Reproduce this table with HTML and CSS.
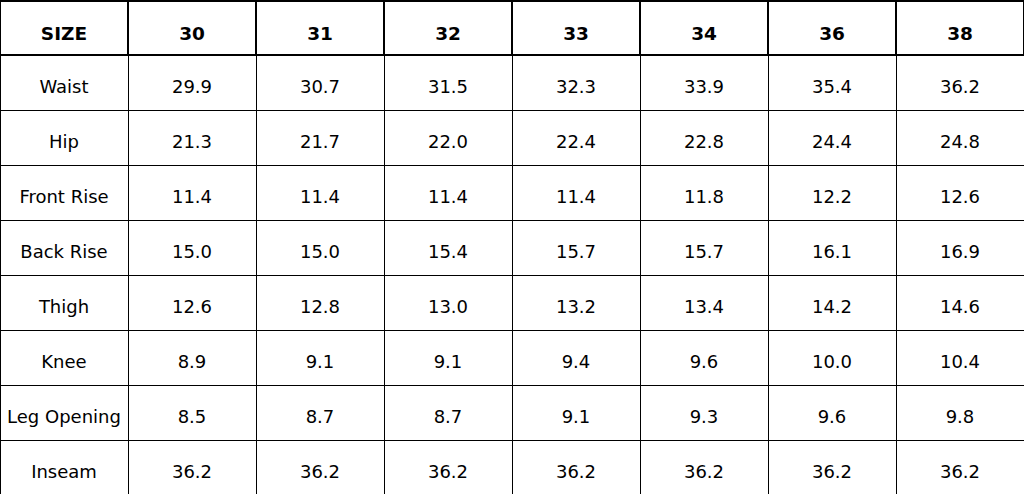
FILE: index.html
```html
<!DOCTYPE html>
<html>
<head>
<meta charset="utf-8">
<link rel="stylesheet" href="styles.css">
</head>
<body>
<table class="size-chart">
<colgroup>
<col class="c"><col class="c"><col class="c"><col class="c"><col class="c"><col class="c"><col class="c"><col class="c">
</colgroup>
<thead>
<tr><th>SIZE</th><th>30</th><th>31</th><th>32</th><th>33</th><th>34</th><th>36</th><th>38</th></tr>
</thead>
<tbody>
<tr><td>Waist</td><td>29.9</td><td>30.7</td><td>31.5</td><td>32.3</td><td>33.9</td><td>35.4</td><td>36.2</td></tr>
<tr><td>Hip</td><td>21.3</td><td>21.7</td><td>22.0</td><td>22.4</td><td>22.8</td><td>24.4</td><td>24.8</td></tr>
<tr><td>Front Rise</td><td>11.4</td><td>11.4</td><td>11.4</td><td>11.4</td><td>11.8</td><td>12.2</td><td>12.6</td></tr>
<tr><td>Back Rise</td><td>15.0</td><td>15.0</td><td>15.4</td><td>15.7</td><td>15.7</td><td>16.1</td><td>16.9</td></tr>
<tr><td>Thigh</td><td>12.6</td><td>12.8</td><td>13.0</td><td>13.2</td><td>13.4</td><td>14.2</td><td>14.6</td></tr>
<tr><td>Knee</td><td>8.9</td><td>9.1</td><td>9.1</td><td>9.4</td><td>9.6</td><td>10.0</td><td>10.4</td></tr>
<tr><td>Leg Opening</td><td>8.5</td><td>8.7</td><td>8.7</td><td>9.1</td><td>9.3</td><td>9.6</td><td>9.8</td></tr>
<tr><td>Inseam</td><td>36.2</td><td>36.2</td><td>36.2</td><td>36.2</td><td>36.2</td><td>36.2</td><td>36.2</td></tr>
</tbody>
</table>
</body>
</html>
```
FILE: styles.css
```css
html, body {
  margin: 0;
  padding: 0;
  background: #fff;
}
body {
  font-family: "DejaVu Sans", sans-serif;
  font-size: 18px;
  color: #000;
  overflow: hidden;
}
.size-chart {
  border-collapse: collapse;
  width: 1024px;
  table-layout: fixed;
  margin-left: -1px;
}
.size-chart .c {
  width: 128px;
}
.size-chart th,
.size-chart td {
  text-align: center;
  vertical-align: middle;
  padding: 0;
}
.size-chart th {
  border: 2px solid #000;
  height: 54px;
  padding-top: 10px;
  box-sizing: border-box;
  font-weight: bold;
  font-size: 18.5px;
}
.size-chart td {
  border: 1px solid #000;
  height: 55px;
  padding-top: 7px;
  box-sizing: border-box;
}
```
